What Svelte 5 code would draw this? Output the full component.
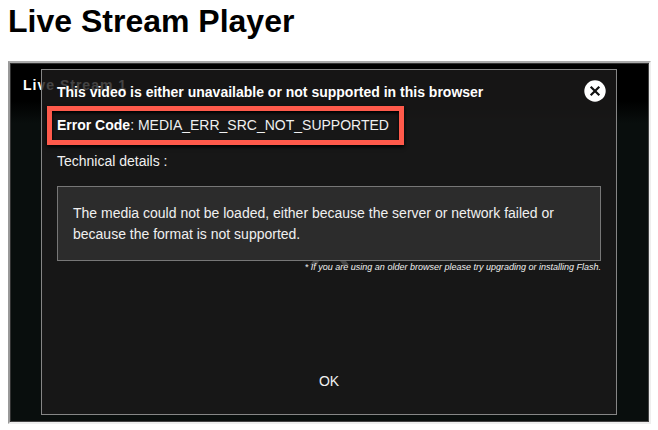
<script>
  const errorCode = 'MEDIA_ERR_SRC_NOT_SUPPORTED';
</script>

<main>
  <h1>Live Stream Player</h1>
  <section class="player">
    <div class="name">Live Stream 1</div>
    <svg class="play" width="44" height="12" viewBox="0 0 44 12"><path d="M0 5 3 1h6l-2 4zM30 1h6l3 4-5 1z" fill="#444" /></svg>
    <div class="dialog">
      <header>
        <strong>This video is either unavailable or not supported in this browser</strong>
        <button class="close" aria-label="Close">
          <svg width="22" height="22" viewBox="0 0 22 22"><circle cx="11" cy="11" r="10.7" fill="#fff" /><path d="M6.7 6.7 15.3 15.3M15.3 6.7 6.7 15.3" stroke="#111" stroke-width="2.2" /></svg>
        </button>
      </header>
      <div class="code"><b>Error Code</b>: {errorCode}</div>
      <p class="details">Technical details :</p>
      <div class="message">The media could not be loaded, either because the server or network failed or<br />because the format is not supported.</div>
      <p class="note">* If you are using an older browser please try upgrading or installing Flash.</p>
      <button class="ok">OK</button>
    </div>
  </section>
</main>

<style>
  :global(body) { background: #fff; }
  main {
    width: 658px; height: 430px; box-sizing: border-box; padding: 0 0 0 8px; overflow: hidden;
    font: 14px/20px "Liberation Sans", Arial, sans-serif; color: #f0f0f0; background: #fff;
  }
  h1 { margin: 0; height: 61px; padding-top: 3px; box-sizing: border-box; font-size: 32px; line-height: 37px; color: #000; white-space: nowrap; }
  .player {
    position: relative; width: 643px; height: 363px; box-sizing: border-box;
    border: 2px solid; border-color: #aaa #eee #eee #999; padding: 6px 0 0 31px;
    background: linear-gradient(#000 0, #000 38px, #090e0d 60px);
    box-shadow: inset 1px 1px 0 #333, inset -1px -1px 0 #444;
  }
  .name { position: absolute; left: 13px; top: 12px; font-weight: bold; letter-spacing: 1px; color: #fff; }
  .play { position: absolute; left: 300px; top: 197px; z-index: 2; }
  .dialog {
    position: relative; width: 576px; height: 346px; box-sizing: border-box;
    border: 1px solid #868686; padding: 0 15px; background: rgba(27, 26, 26, .82);
    display: flex; flex-direction: column;
  }
  header { height: 36px; flex: none; display: flex; justify-content: space-between; white-space: nowrap; }
  header strong { padding-top: 12px; line-height: 20px; color: #fff; }
  button { border: 0; padding: 0; margin: 0; background: none; color: inherit; font: inherit; }
  .close { width: 22px; height: 22px; margin: 10px -5px 0 0; }
  .close svg { display: block; }
  .code {
    flex: none; width: 357px; height: 39px; box-sizing: border-box; margin-left: -10px;
    border: 5px solid #ff5a4b; padding: 4px 0 0 5px; white-space: nowrap;
    box-shadow: 0 2px 4px #000, inset 0 2px 3px #000;
  }
  .code b { color: #fff; }
  .details { margin: 6px 0 0; height: 35px; line-height: 20px; }
  .message {
    flex: none; height: 75px; box-sizing: border-box; border: 1px solid #777; background: #2c2c2c;
    padding: 16px 15px 14px; line-height: 21px; white-space: nowrap;
  }
  .note { margin: 0; line-height: 12px; font-size: 9px; font-style: italic; text-align: right; white-space: nowrap; position: relative; z-index: 3; }
  .ok { width: 40px; height: 20px; margin: 98px auto 0; }
</style>
